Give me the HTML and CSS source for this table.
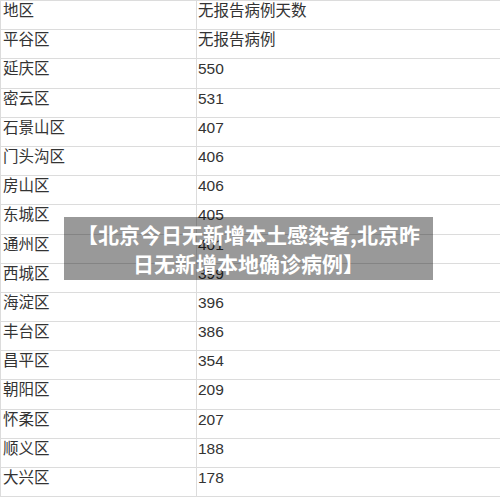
FILE: index.html
```html
<!DOCTYPE html>
<html lang="zh-CN">
<head>
<meta charset="utf-8">
<title>北京无新增本地确诊病例</title>
<link rel="stylesheet" href="styles.css">
</head>
<body>
<div class="page">
  <table class="sheet">
    <colgroup><col class="col-area"><col class="col-days"></colgroup>
    <tbody>
      <tr><td>地区</td><td>无报告病例天数</td></tr>
      <tr><td>平谷区</td><td>无报告病例</td></tr>
      <tr><td>延庆区</td><td>550</td></tr>
      <tr><td>密云区</td><td>531</td></tr>
      <tr><td>石景山区</td><td>407</td></tr>
      <tr><td>门头沟区</td><td>406</td></tr>
      <tr><td>房山区</td><td>406</td></tr>
      <tr><td>东城区</td><td>405</td></tr>
      <tr><td>通州区</td><td>401</td></tr>
      <tr><td>西城区</td><td>399</td></tr>
      <tr><td>海淀区</td><td>396</td></tr>
      <tr><td>丰台区</td><td>386</td></tr>
      <tr><td>昌平区</td><td>354</td></tr>
      <tr><td>朝阳区</td><td>209</td></tr>
      <tr><td>怀柔区</td><td>207</td></tr>
      <tr><td>顺义区</td><td>188</td></tr>
      <tr><td>大兴区</td><td>178</td></tr>
    </tbody>
  </table>
  <div class="caption">【北京今日无新增本土感染者,北京昨<br>日无新增本地确诊病例】</div>
</div>
</body>
</html>
```

FILE: styles.css
```css
html, body {
  margin: 0;
  padding: 0;
  background: #fff;
}

.page {
  position: relative;
  width: 500px;
  height: 498px;
  overflow: hidden;
}

.sheet {
  width: 500px;
  border-collapse: collapse;
  table-layout: fixed;
  font-family: "Liberation Sans", "Noto Sans CJK SC", sans-serif;
  font-size: 15.5px;
  line-height: 20px;
  color: #333;
}

.col-area { width: 196px; }

.sheet tr {
  height: 29.2px;
}

.sheet td {
  padding: 0 0 0 2px;
  vertical-align: baseline;
  border-top: 1px solid #dcdcdc;
  border-bottom: 1px solid #dcdcdc;
  white-space: nowrap;
}

.sheet td:first-child {
  border-left: 1px solid #dcdcdc;
  border-right: 1px solid #dcdcdc;
}

.sheet td + td {
  padding-left: 1px;
}

.caption {
  position: absolute;
  left: 64px;
  top: 217px;
  width: 369px;
  box-sizing: border-box;
  padding: 3px 0;
  background: rgba(0, 0, 0, 0.4);
  color: #fff;
  font-family: "Noto Sans CJK SC", sans-serif;
  font-weight: 700;
  font-size: 21px;
  line-height: 28.5px;
  text-align: center;
}
```
